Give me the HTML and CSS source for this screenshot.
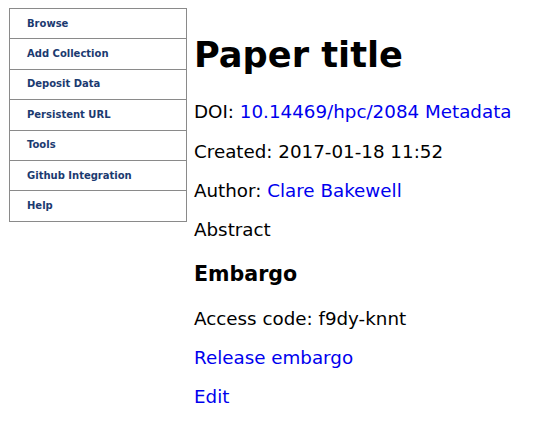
FILE: index.html
```html
<!DOCTYPE html>
<html>
<head>
<meta charset="utf-8">
<title>Paper title</title>
<link rel="stylesheet" href="styles.css">
</head>
<body>
<div class="page">
  <nav class="sidebar">
    <a class="nav-item" href="#">Browse</a>
    <a class="nav-item" href="#">Add Collection</a>
    <a class="nav-item" href="#">Deposit Data</a>
    <a class="nav-item" href="#">Persistent URL</a>
    <a class="nav-item" href="#">Tools</a>
    <a class="nav-item" href="#">Github Integration</a>
    <a class="nav-item" href="#">Help</a>
  </nav>
  <main class="content">
    <h1 class="title">Paper title</h1>
    <p class="line first">DOI: <a class="link" href="#">10.14469/hpc/2084</a> <a class="link" href="#">Metadata</a></p>
    <p class="line">Created: 2017-01-18 11:52</p>
    <p class="line">Author: <a class="link" href="#">Clare Bakewell</a></p>
    <p class="line">Abstract</p>
    <h3 class="section">Embargo</h3>
    <p class="line after-section">Access code: f9dy-knnt</p>
    <p class="line"><a class="link" href="#">Release embargo</a></p>
    <p class="line"><a class="link" href="#">Edit</a></p>
  </main>
</div>
</body>
</html>
```
FILE: styles.css
```css
html, body {
  margin: 0;
  padding: 0;
  background: #ffffff;
}
body {
  padding: 8px 0 0 9px;
  font-family: "DejaVu Sans", Verdana, sans-serif;
  font-size: 18.3px;
  line-height: 21px;
  color: #000;
}
.page {
  display: flex;
  align-items: flex-start;
  gap: 7px;
}
.sidebar {
  display: flex;
  flex-direction: column;
  width: 176px;
  border: 1px solid #8a8a8a;
  flex-shrink: 0;
}
.nav-item {
  display: flex;
  align-items: center;
  height: 29.4px;
  padding-left: 17px;
  font-size: 10px;
  font-weight: bold;
  color: #1b3a70;
  text-decoration: none;
  border-top: 1px solid #8a8a8a;
  line-height: 1;
}
.nav-item:first-child {
  border-top: none;
}
.content {
  flex: 1;
  display: flex;
  flex-direction: column;
  align-items: flex-start;
}
.title {
  font-size: 35.2px;
  font-weight: bold;
  margin: 25px 0 0 0;
  line-height: 43px;
}
.line {
  margin: 18.3px 0 0 0;
}
.line.first {
  margin-top: 25.3px;
}
.section {
  font-size: 20.6px;
  font-weight: bold;
  margin: 20.8px 0 0 0;
  line-height: 26px;
}
.line.after-section {
  margin-top: 20.8px;
}
.link {
  color: #0000ee;
  text-decoration: none;
}
```
